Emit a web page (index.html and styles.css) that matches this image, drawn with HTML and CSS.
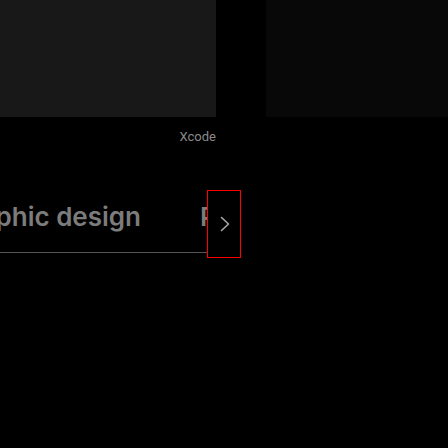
FILE: index.html
```html
<!DOCTYPE html>
<html>
<head>
<meta charset="utf-8">
<link rel="stylesheet" href="styles.css">
</head>
<body>
<div class="cards">
  <div class="card card-a"></div>
  <div class="card card-b"></div>
</div>
<div class="caption">Xcode</div>
<div class="tabs">
  <div class="strip">
    <div class="track">
      <span class="tab">Graphic design</span>
      <span class="tab">Product design</span>
    </div>
  </div>
  <button class="next" aria-label="Next">
    <svg width="10" height="16" viewBox="0 0 10 16"><path d="M1.5 1.5 L8.5 8 L1.5 14.5" fill="none" stroke="#a8a8a8" stroke-width="1.6" stroke-linecap="round" stroke-linejoin="round"/></svg>
  </button>
</div>
</body>
</html>
```
FILE: styles.css
```css
html, body {
  margin: 0;
  padding: 0;
  background: #000;
  height: 100%;
  overflow: hidden;
}
.cards {
  display: flex;
  gap: 50px;
  height: 117px;
}
.card-a {
  width: 216px;
  background: #181818;
}
.card-b {
  flex: 1;
  background: #080808;
}
.caption {
  width: 216px;
  margin-top: 12px;
  text-align: right;
  font-family: Roboto, "Liberation Sans", sans-serif;
  font-size: 13px;
  line-height: 16px;
  color: #8a8a8a;
}
.tabs {
  position: relative;
  width: 241px;
  height: 68px;
  margin-top: 45px;
}
.strip {
  height: 62px;
  border-bottom: 1px solid #555;
  overflow: hidden;
  box-sizing: content-box;
}
.track {
  display: flex;
  gap: 59px;
  margin-left: -49px;
  white-space: nowrap;
}
.tab {
  flex: none;
  font-family: Inter, "Liberation Sans", sans-serif;
  font-weight: 600;
  font-size: 26px;
  line-height: 54px;
  color: #7c7c7c;
}
.next {
  position: absolute;
  right: 0;
  top: 0;
  width: 34px;
  height: 68px;
  box-sizing: border-box;
  border: 1px solid #ff0000;
  background: #000;
  padding: 0;
  margin: 0;
  display: flex;
  align-items: center;
  justify-content: center;
}
.next svg {
  display: block;
  margin-left: 1px;
}
```
